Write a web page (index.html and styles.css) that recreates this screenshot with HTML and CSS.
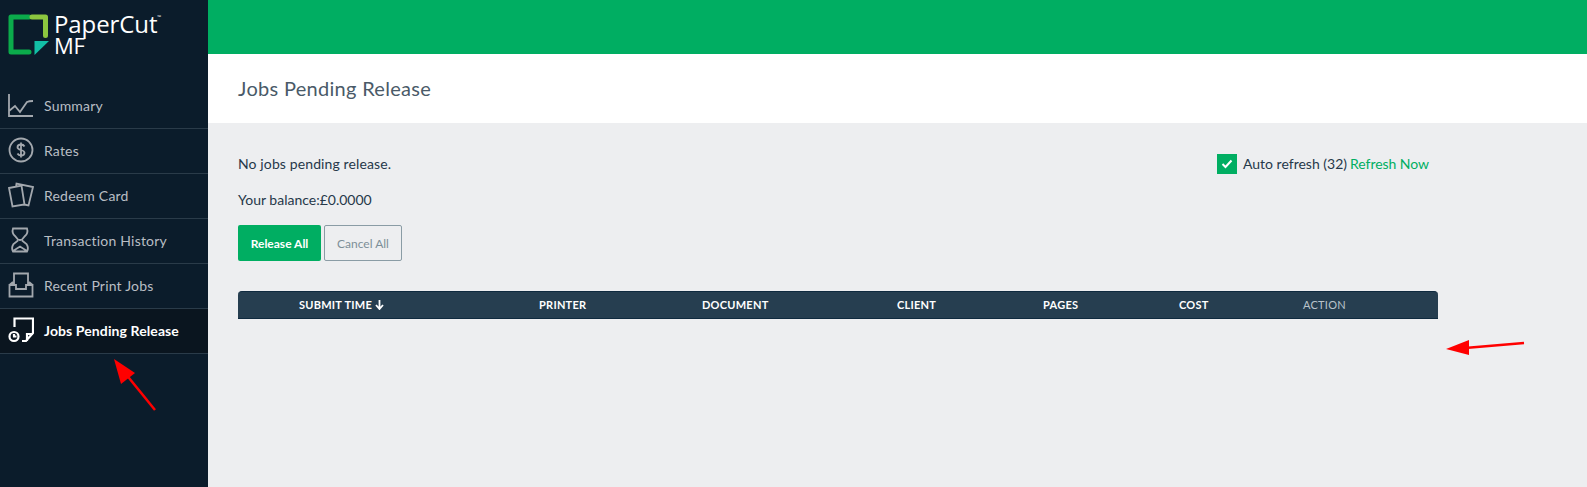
FILE: index.html
```html
<!DOCTYPE html>
<html lang="en">
<head>
<meta charset="utf-8">
<title>Jobs Pending Release</title>
<link rel="stylesheet" href="styles.css">
</head>
<body>
<div class="app">
  <aside class="sidebar">
    <div class="brand">
      <svg class="logo" width="42" height="42" viewBox="0 0 42 42">
        <path d="M21 3H3V38H21" fill="none" stroke="#0bab4b" stroke-width="5" stroke-linecap="round" stroke-linejoin="round"/>
        <path d="M24 3H37.500V21.500" fill="none" stroke="#8cc63f" stroke-width="5" stroke-linecap="round" stroke-linejoin="round"/>
        <path d="M26.500 27H41L26.500 41Z" fill="#12bfa6"/>
      </svg>
      <div class="wordmark"><div class="wm-main">PaperCut<sup class="tm">™</sup></div><div class="wm-sub">MF</div></div>
    </div>
    <nav class="nav">
      <a class="nav-item"><svg class="ico" viewBox="0 0 26 26"><path d="M1 2V24H25M1 19L7 14L12 20L19 10Q21 9 25 9"/></svg><span>Summary</span></a>
      <a class="nav-item"><svg class="ico" viewBox="0 0 26 26"><circle cx="13" cy="13" r="11.500"/><path d="M16.500 9.500Q15.500 7.500 13 7.500Q9.500 7.500 9.500 10.300C9.500 13.800 16.500 12.200 16.500 15.700Q16.500 18.500 13 18.500Q10.500 18.500 9.500 16.500M13 5.500V20.500"/></svg><span>Rates</span></a>
      <a class="nav-item"><svg class="ico" viewBox="0 0 26 26"><path d="M8 5L8.500 1.500L25 5L20.500 23.500L16 22.500M1 6L13.500 3.500L16.500 22.500L4.500 24.500Z"/></svg><span>Redeem Card</span></a>
      <a class="nav-item"><svg class="ico" viewBox="0 0 26 26"><path d="M5 1.500H19Q20.500 6 17 9L14 12.500Q12 13.500 10 12.500L7 9Q3.500 6 5 1.500ZM10 13.500L5.500 17Q3 21 5 24.500H19Q21 21 18.500 17L14 13.500M5 24L12 19.500L19 24"/></svg><span>Transaction History</span></a>
      <a class="nav-item"><svg class="ico" viewBox="0 0 26 26"><path d="M6 13V1.500H20V13M1.500 13L5 10M24.500 13L21 10M1.500 13V24.500H24.500V13H18V17H8V13Z"/></svg><span>Recent Print Jobs</span></a>
      <a class="nav-item active"><svg class="ico" viewBox="0 0 26 26"><path d="M6.500 10V1.500H25V16L18 24H14M19 24V17H25"/><circle cx="6" cy="19.500" r="4.500"/><path d="M6 17V19.500H8.500"/></svg><span>Jobs Pending Release</span></a>
    </nav>
  </aside>
  <main class="main">
    <div class="topbar"></div>
    <header class="page-head"><h1>Jobs Pending Release</h1></header>
    <section class="content">
      <div class="status-row">
        <p class="msg">No jobs pending release.</p>
        <div class="refresh">
          <span class="check"><svg width="12" height="10" viewBox="0 0 12 10"><path d="M1.500 5L4.500 8L10.500 1.500" fill="none" stroke="#fff" stroke-width="2"/></svg></span>
          <span>Auto refresh (32)</span>
          <a class="refresh-link">Refresh Now</a>
        </div>
      </div>
      <p class="balance">Your balance:£0.0000</p>
      <div class="actions">
        <button class="btn primary">Release All</button>
        <button class="btn ghost">Cancel All</button>
      </div>
      <div class="thead">
        <span>SUBMIT TIME <svg class="sort" width="9" height="10" viewBox="0 0 9 10"><path d="M4.500 0V8M1 5L4.500 9L8 5" fill="none" stroke="#fff" stroke-width="1.800"/></svg></span>
        <span>PRINTER</span>
        <span>DOCUMENT</span>
        <span>CLIENT</span>
        <span>PAGES</span>
        <span>COST</span>
        <span class="muted">ACTION</span>
      </div>
    </section>
  </main>
</div>
<svg class="annot" width="1587" height="487" viewBox="0 0 1587 487">
  <path d="M155 410L125 373" stroke="#f00" stroke-width="2.500" fill="none"/>
  <path d="M114 359L135 373L121 384Z" fill="#f00"/>
  <path d="M1524 343L1465 348" stroke="#f00" stroke-width="2.500" fill="none"/>
  <path d="M1446 349L1469 340L1469 355Z" fill="#f00"/>
</svg>
</body>
</html>
```

FILE: styles.css
```css
* { box-sizing: border-box; }
html, body { margin: 0; height: 100%; overflow: hidden; }
body { font-family: "Lato", "Noto Sans", sans-serif; color: #26384a; background: #edeef0; }
.app { display: flex; height: 487px; }

.sidebar { width: 208px; flex: none; background: #0b1c2b; }
.brand { display: flex; height: 84px; padding: 13px 0 0 8px; gap: 4px; }
.logo { flex: none; margin-top: 1px; }
.wordmark { color: #fff; font-family: "Open Sans", sans-serif; line-height: 1; }
.wm-main { font-size: 24px; line-height: 22px; white-space: nowrap; font-weight: 500; letter-spacing: -0.1px; }
.wm-sub { font-size: 22px; line-height: 20px; letter-spacing: -0.3px; font-weight: 500; }
.tm { font-size: 5px; vertical-align: 14px; line-height: 0; }

.nav { display: flex; flex-direction: column; }
.nav-item { height: 45px; display: flex; align-items: center; padding: 0 0 2px 8px; gap: 10px; color: #b9bec4; font-size: 14px; letter-spacing: 0.2px; border-bottom: 1px solid #2a3b49; white-space: nowrap; }
.ico { width: 26px; height: 26px; flex: none; fill: none; stroke: #a3a8ae; stroke-width: 1.800; }
.nav-item.active { background: #0a151f; color: #fff; font-weight: 700; letter-spacing: 0.1px; }
.nav-item.active .ico { stroke: #fff; stroke-width: 2.200; }

.main { flex: 1; display: flex; flex-direction: column; min-width: 0; }
.topbar { height: 54px; background: #00ae62; }
.page-head { height: 69px; background: #fff; display: flex; align-items: center; padding-left: 30px; }
.page-head h1 { margin: 0; font-size: 20px; font-weight: 400; color: #4a5a68; letter-spacing: 0.3px; position: relative; top: -1px; }

.content { flex: 1; width: 1230px; padding: 30px 0 0 30px; font-size: 14px; }
.status-row { display: flex; justify-content: space-between; align-items: center; height: 21px; padding-right: 9px; }
.msg, .balance { margin: 0; }
.msg { letter-spacing: 0.12px; }
.refresh { display: flex; align-items: center; gap: 3px; }
.check { width: 20px; height: 20px; background: #00ae62; display: flex; align-items: center; justify-content: center; margin-right: 3px; }
.refresh-link { color: #00ae62; letter-spacing: -0.05px; }
.balance { margin-top: 15px; height: 21px; line-height: 21px; }
.actions { display: flex; gap: 3px; margin-top: 15px; }
.btn { height: 36px; border-radius: 2px; font-family: inherit; font-size: 12px; padding: 0; }
.primary { width: 83px; background: #00ae62; color: #fff; border: 0; font-weight: 700; }
.ghost { width: 78px; background: transparent; color: #7d8e98; border: 1px solid #8a9ca5; }
.thead { margin-top: 30px; width: 1200px; height: 28px; background: #263e50; border: 1px solid #0f2a3f; border-width: 1px 0; border-radius: 4px 4px 0 0; padding: 0 0 1px 61px; display: grid; grid-template-columns: 240px 163px 195px 146px 136px 124px 1fr; align-items: center; color: #fff; font-size: 11px; font-weight: 700; letter-spacing: 0.25px; white-space: nowrap; }
.thead .muted { color: #b9c3ca; font-weight: 400; }
.sort { vertical-align: -1px; }

.annot { position: absolute; left: 0; top: 0; pointer-events: none; }
```
